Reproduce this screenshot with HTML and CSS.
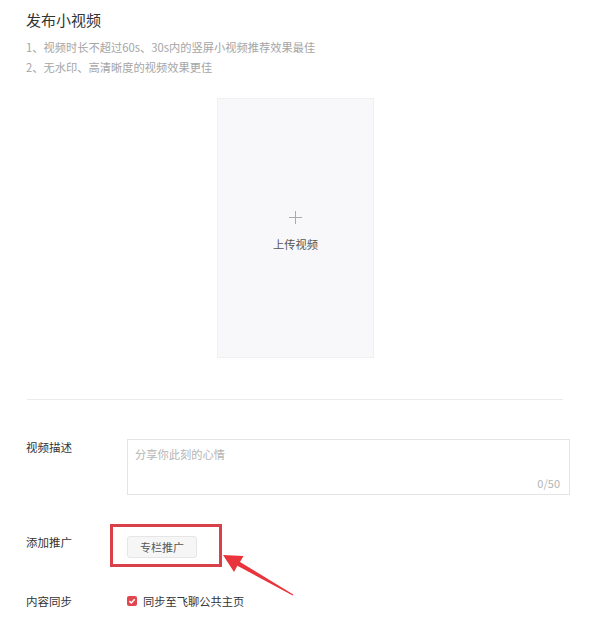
FILE: index.html
```
<!DOCTYPE html>
<html lang="zh-CN">
<head>
    <meta charset="UTF-8">
    <meta name="viewport" content="width=device-width, initial-scale=1.0">
    <title>发布小视频</title>
    <link rel="stylesheet" href="styles.css">
</head>
<body>
    <div class="page">
        <h1 class="title">发布小视频</h1>
        <div class="tips">
            <p>1、视频时长不超过60s、30s内的竖屏小视频推荐效果最佳</p>
            <p>2、无水印、高清晰度的视频效果更佳</p>
        </div>

        <div class="upload-wrap">
            <div class="upload">
                <span class="plus"></span>
                <span class="upload-text">上传视频</span>
            </div>
        </div>

        <div class="divider"></div>

        <div class="form-row">
            <label class="form-label">视频描述</label>
            <div class="desc">
                <span class="placeholder">分享你此刻的心情</span>
                <span class="counter">0/50</span>
            </div>
        </div>

        <div class="form-row promo-row">
            <label class="form-label">添加推广</label>
            <div class="promo">
                <button class="promo-btn">专栏推广</button>
                <div class="mark"></div>
                <svg class="arrow" width="80" height="50" viewBox="0 0 80 50">
                    <polygon points="6,7 26.5,8 23,14 76.3,46.6 75.7,47.4 20.4,17.8 17,24" fill="#e8343a"/>
                </svg>
            </div>
        </div>

        <div class="form-row sync-row">
            <label class="form-label">内容同步</label>
            <div class="sync">
                <span class="check">
                    <svg width="10" height="10" viewBox="0 0 10 10">
                        <path d="M2.4 5.1 L4.3 6.9 L7.7 3.3" fill="none" stroke="#fff" stroke-width="1.5"/>
                    </svg>
                </span>
                <span>同步至飞聊公共主页</span>
            </div>
        </div>
    </div>
</body>
</html>
```

FILE: styles.css
```
body {
    margin: 0;
    font-family: "Noto Sans CJK SC", "Noto Sans", sans-serif;
    color: #333;
    background: #fff;
}
.page {
    width: 574px;
    padding: 8px 0 0 26px;
}
.title {
    margin: 0;
    font-size: 15px;
    line-height: 24px;
    font-weight: normal;
    color: #333;
}
.tips {
    margin-top: 5px;
    font-size: 11.25px;
    line-height: 20px;
    color: #a5a5a5;
}
.tips p {
    margin: 0;
}
.upload-wrap {
    width: 539px;
    display: flex;
    justify-content: center;
    margin-top: 21px;
}
.upload {
    width: 157px;
    height: 260px;
    box-sizing: border-box;
    border: 1px solid #f0f0f2;
    background: #f8f8fa;
    display: flex;
    flex-direction: column;
    align-items: center;
    justify-content: center;
    gap: 12px;
    padding-top: 6px;
}
.plus {
    position: relative;
    width: 13px;
    height: 13px;
}
.plus::before, .plus::after {
    content: "";
    position: absolute;
    background: #aaa;
}
.plus::before {
    left: 0;
    top: 6px;
    width: 13px;
    height: 1px;
}
.plus::after {
    left: 6px;
    top: 0;
    width: 1px;
    height: 13px;
}
.upload-text {
    font-size: 11.25px;
    line-height: 16px;
    color: #555;
}
.divider {
    width: 536px;
    margin: 41px 0 0 1px;
    border-top: 1px solid #ebebeb;
}
.form-row {
    display: flex;
    margin-top: 39px;
}
.form-label {
    width: 101px;
    flex: none;
    font-size: 11.5px;
    line-height: 16px;
    color: #333;
}
.desc {
    position: relative;
    width: 443px;
    height: 56px;
    box-sizing: border-box;
    border: 1px solid #e4e4e4;
    padding: 6px 7px;
    font-size: 11.25px;
    line-height: 16px;
}
.placeholder {
    color: #b5b5b5;
}
.counter {
    position: absolute;
    right: 9px;
    bottom: 3px;
    font-size: 11px;
    color: #b5b5b5;
}
.promo-row {
    margin-top: 38px;
}
.promo-row .form-label {
    padding-top: 1px;
}
.promo {
    position: relative;
}
.promo-btn {
    width: 70px;
    height: 22px;
    padding: 0;
    border: 1px solid #e6e6e6;
    border-radius: 3px;
    background: #f6f6f6;
    font-family: inherit;
    font-size: 11px;
    color: #555;
}
.mark {
    position: absolute;
    left: -17px;
    top: -9px;
    width: 112px;
    height: 43px;
    box-sizing: border-box;
    border: 3px solid #d9414a;
}
.arrow {
    position: absolute;
    left: 90px;
    top: 15px;
}
.sync-row {
    margin-top: 35px;
}
.sync {
    display: flex;
    align-items: center;
    gap: 6px;
    font-size: 11.25px;
    line-height: 16px;
    color: #333;
}
.check {
    width: 10px;
    height: 10px;
    border-radius: 2px;
    background: #e2474f;
    display: flex;
}
```
